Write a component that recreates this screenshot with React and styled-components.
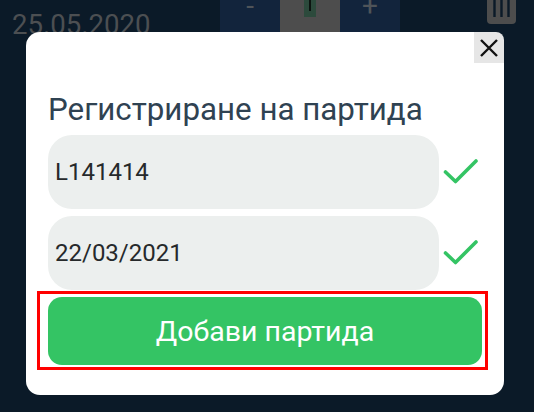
import React from 'react'
import styled, { createGlobalStyle } from 'styled-components'

const GlobalStyle = createGlobalStyle`
  html, body {
    margin: 0;
    padding: 0;
    background: #0b1a28;
    font-family: Roboto, "Noto Sans", sans-serif;
  }
`

const Page = styled.div`
  position: relative;
  width: 534px;
  height: 412px;
  overflow: hidden;
  background: #0b1a28;
`

// Row behind the dialog
const BackRow = styled.div`
  display: flex;
  align-items: flex-start;
  height: 32px;
  padding-left: 12px;
`
const DateText = styled.div`
  width: 208px;
  margin-top: 9px;
  font-size: 27.6px;
  line-height: 32px;
  color: #4c4f52;
  white-space: nowrap;
`
const Stepper = styled.div`
  display: flex;
  height: 32px;
`
const StepButton = styled.div`
  display: flex;
  justify-content: center;
  width: 60px;
  font-size: 28px;
  line-height: 12px;
  color: #4f5459;
  background: #12243c;
`
const StepValue = styled.div`
  display: flex;
  justify-content: center;
  width: 60px;
  background: #4d4d4d;
`
const ValueMark = styled.div`
  display: flex;
  justify-content: center;
  width: 12px;
  height: 17px;
  background: #2c4a3c;
  &::after {
    content: '';
    width: 2px;
    height: 11px;
    background: #0c1410;
  }
`
const TrashIcon = styled.svg`
  margin-left: 87px;
  flex: none;
`

// Dialog
const Modal = styled.div`
  position: absolute;
  left: 26px;
  top: 32px;
  width: 478px;
  height: 363px;
  box-sizing: border-box;
  padding: 60px 22px 0;
  display: flex;
  flex-direction: column;
  background: #fff;
  border-radius: 14px;
`
const CloseButton = styled.button`
  position: absolute;
  top: 0;
  right: 0;
  display: flex;
  align-items: center;
  justify-content: center;
  width: 30px;
  height: 31px;
  padding: 0;
  border: 0;
  border-top-right-radius: 8px;
  background: #e6e6e6;
`
const Title = styled.h2`
  margin: 0 0 7px;
  font-size: 31.3px;
  line-height: 36px;
  font-weight: 400;
  white-space: nowrap;
  color: #2f4252;
`
const FieldRow = styled.div`
  display: flex;
  align-items: center;
  gap: 4px;
  margin-bottom: 7px;
`
const Field = styled.div`
  display: flex;
  align-items: center;
  width: 391px;
  height: 74px;
  box-sizing: border-box;
  padding-left: 7px;
  font-size: 24px;
  color: #26292b;
  background: #ecefee;
  border-radius: 24px;
`
const SubmitButton = styled.button`
  position: relative;
  height: 68px;
  padding: 0;
  border: 0;
  border-radius: 14px;
  font-family: inherit;
  font-size: 28.5px;
  color: #fff;
  background: #34c464;
  &::after {
    content: '';
    position: absolute;
    top: -6px;
    left: -11px;
    right: -6px;
    bottom: -5px;
    border: 3px solid #f00;
    pointer-events: none;
  }
`

function Check () {
  return (
    <svg width="36" height="30" viewBox="0 0 36 30" fill="none">
      <path d="M2.5 15 L12.5 24.5 L33 4" stroke="#34c464" strokeWidth="3.6" strokeLinecap="round" strokeLinejoin="round" />
    </svg>
  )
}

function App () {
  return (
    <Page>
      <GlobalStyle />
      <BackRow>
        <DateText>25.05.2020</DateText>
        <Stepper>
          <StepButton>-</StepButton>
          <StepValue><ValueMark /></StepValue>
          <StepButton>+</StepButton>
        </Stepper>
        <TrashIcon width="29" height="24" viewBox="0 0 29 24">
          <path d="M0 0 H29 V20 Q29 24 25 24 H4 Q0 24 0 20 Z" fill="#4d4d4d" />
          <path d="M7.5 0 V17 M14.5 0 V17 M21.5 0 V17" stroke="#0b1a28" strokeWidth="2.4" />
        </TrashIcon>
      </BackRow>

      <Modal>
        <CloseButton>
          <svg width="18" height="18" viewBox="0 0 18 18">
            <path d="M1 1 L17 17 M17 1 L1 17" stroke="#111" strokeWidth="2.4" />
          </svg>
        </CloseButton>
        <Title>Регистриране на партида</Title>
        <FieldRow>
          <Field>L141414</Field>
          <Check />
        </FieldRow>
        <FieldRow>
          <Field>22/03/2021</Field>
          <Check />
        </FieldRow>
        <SubmitButton>Добави партида</SubmitButton>
      </Modal>
    </Page>
  )
}

export default App
